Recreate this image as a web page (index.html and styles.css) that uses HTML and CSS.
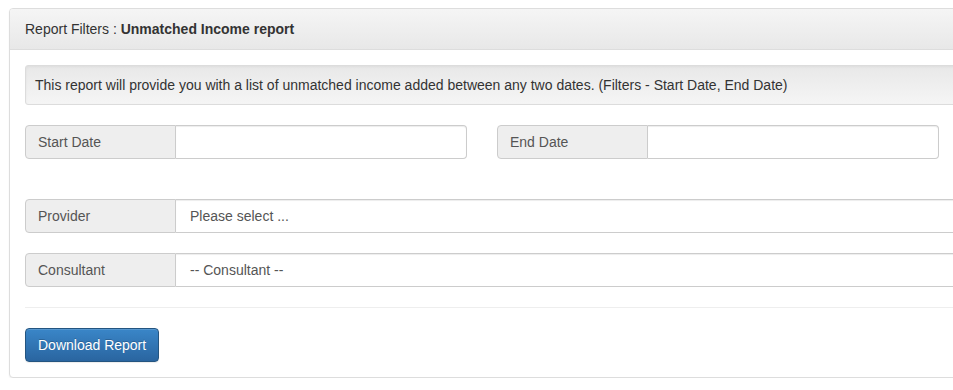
FILE: index.html
```html
<!DOCTYPE html>
<html lang="en">
<head>
    <meta charset="UTF-8">
    <title>Unmatched Income report</title>
    <link rel="stylesheet" href="styles.css">
</head>
<body>
    <div class="panel">
        <div class="panel-heading">Report Filters : <b>Unmatched Income report</b></div>
        <div class="panel-body">
            <div class="well">This report will provide you with a list of unmatched income added between any two dates. (Filters - Start Date, End Date)</div>
            <div class="date-row">
                <div class="input-group">
                    <span class="addon">Start Date</span>
                    <span class="control"></span>
                </div>
                <div class="input-group">
                    <span class="addon">End Date</span>
                    <span class="control"></span>
                </div>
            </div>
            <div class="input-group wide">
                <span class="addon">Provider</span>
                <span class="control">Please select ...</span>
            </div>
            <div class="input-group wide last">
                <span class="addon">Consultant</span>
                <span class="control">-- Consultant --</span>
            </div>
            <hr>
            <button class="btn">Download Report</button>
        </div>
    </div>
</body>
</html>
```
FILE: styles.css
```css
* {
    box-sizing: border-box;
}
html, body {
    margin: 0;
    padding: 0;
    overflow: hidden;
    background: #fff;
}
body {
    font-family: "Liberation Sans", Arial, sans-serif;
    font-size: 14px;
    line-height: 20px;
    color: #333;
}
.panel {
    width: 1000px;
    margin: 8px 0 0 9px;
    border: 1px solid #ddd;
    border-radius: 4px;
    box-shadow: 0 1px 2px rgba(0, 0, 0, .06);
    background: #fff;
}
.panel-heading {
    padding: 10px 15px;
    border-bottom: 1px solid #ddd;
    border-radius: 3px 3px 0 0;
    background: linear-gradient(to bottom, #f5f5f5 0, #e8e8e8 100%);
}
.panel-heading b {
    font-weight: bold;
}
.panel-body {
    padding: 15px;
}
.well {
    padding: 9px;
    margin-bottom: 20px;
    border: 1px solid #dcdcdc;
    border-radius: 3px;
    background: linear-gradient(to bottom, #e8e8e8 0, #f5f5f5 100%);
    box-shadow: inset 0 1px 3px rgba(0, 0, 0, .05), 0 1px 0 rgba(255, 255, 255, .1);
}
.date-row {
    display: grid;
    grid-template-columns: 442px 442px;
    gap: 30px;
    margin-bottom: 40px;
}
.input-group {
    display: flex;
    height: 34px;
}
.input-group.wide {
    margin-bottom: 20px;
}
.input-group.last {
    margin-bottom: 0;
}
.addon {
    width: 151px;
    flex: none;
    padding: 6px 12px;
    color: #555;
    background: #eee;
    border: 1px solid #ccc;
    border-radius: 4px 0 0 4px;
}
.control {
    flex: 1;
    padding: 6px 14px;
    color: #555;
    background: #fff;
    border: 1px solid #ccc;
    border-left: 0;
    border-radius: 0 4px 4px 0;
    box-shadow: inset 0 1px 1px rgba(0, 0, 0, .075);
}
hr {
    margin: 20px 0;
    border: 0;
    border-top: 1px solid #eee;
}
.btn {
    display: block;
    height: 34px;
    padding: 6px 12px;
    font-family: inherit;
    font-size: 14px;
    line-height: 20px;
    color: #fff;
    text-shadow: 0 -1px 0 rgba(0, 0, 0, .2);
    background: linear-gradient(to bottom, #3a86c8 0, #2a65a0 100%);
    border: 1px solid #245580;
    border-radius: 4px;
    box-shadow: inset 0 1px 0 rgba(255, 255, 255, .15), 0 1px 1px rgba(0, 0, 0, .075);
    cursor: pointer;
}
```
